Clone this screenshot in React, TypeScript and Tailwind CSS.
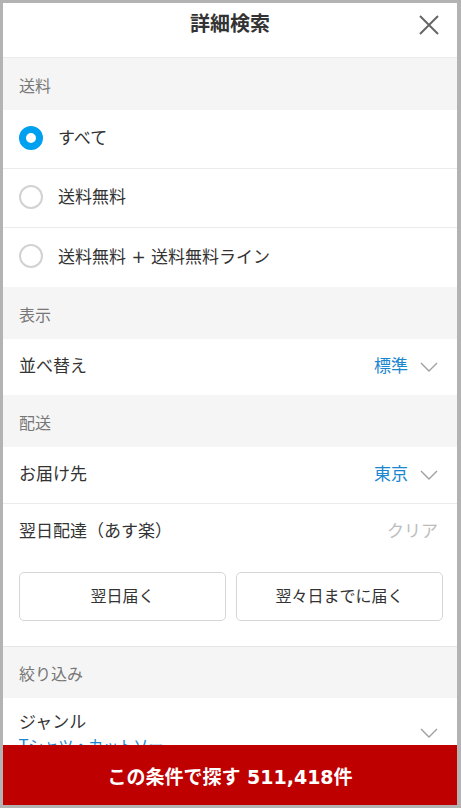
import React from "react";

const FONT = { fontFamily: '"DejaVu Sans", "Noto Sans CJK JP", "Noto Sans", sans-serif' };

function Chevron() {
  return (
    <svg width="18" height="10" viewBox="0 0 18 10" className="shrink-0">
      <path d="M1 1 L9 9 L17 1" fill="none" stroke="#a0a0a0" strokeWidth="1.4" />
    </svg>
  );
}

function SectionHeader({ label, borderTop }: { label: string; borderTop?: boolean }) {
  return (
    <div
      className={`h-[52px] shrink-0 flex items-center pt-[5px] px-4 bg-[#f5f5f5] text-[16px] text-[#777] ${
        borderTop ? "border-t border-[#e6e6e6]" : ""
      }`}
    >
      {label}
    </div>
  );
}

function RadioRow({ label, checked, border }: { label: React.ReactNode; checked?: boolean; border?: boolean }) {
  return (
    <div className={`h-[59px] shrink-0 flex items-center gap-[15px] px-4 pb-[3px] bg-white ${border ? "border-b border-[#ebebeb]" : ""}`}>
      {checked ? (
        <span className="w-6 h-6 rounded-full border-[7px] border-[#00a0f0] bg-white shrink-0" />
      ) : (
        <span className="w-6 h-6 rounded-full border-2 border-[#d2d2d2] bg-white shrink-0" />
      )}
      <span className="text-[17px] text-[#333] pt-[3px]">{label}</span>
    </div>
  );
}

function SelectRow({ label, value, border }: { label: string; value: string; border?: boolean }) {
  return (
    <div className={`shrink-0 flex items-center pl-4 pr-[19px] bg-white ${border ? "border-b border-[#ebebeb] h-[57px]" : "h-[56px]"}`}>
      <span className="flex-1 text-[17px] text-[#333]">{label}</span>
      <span className="text-[17px] text-[#1a86d0] mr-[12px]">{value}</span>
      <Chevron />
    </div>
  );
}

export default function App() {
  return (
    <div
      className="w-[461px] h-[808px] border-t-[3px] border-l-[3px] border-b-[3px] border-r-4 border-[#b3b3b3] bg-white overflow-hidden"
      style={FONT}
    >
      <div className="h-full flex flex-col">
        {/* Header */}
        <div className="h-[55px] shrink-0 border-b border-[#ebebeb] flex items-start justify-center relative">
          <h1 className="mt-[5px] text-[20px] leading-[32px] font-bold text-[#333]">詳細検索</h1>
          <button className="absolute right-[17px] top-[11px] w-[22px] h-[22px] flex items-center justify-center">
            <svg width="20" height="20" viewBox="0 0 20 20">
              <path d="M1 1 L19 19 M19 1 L1 19" stroke="#666" strokeWidth="2" />
            </svg>
          </button>
        </div>

        {/* Scrolling content */}
        <div className="flex-1 overflow-hidden flex flex-col">
          <SectionHeader label="送料" />
          <RadioRow label="すべて" checked border />
          <RadioRow label="送料無料" border />
          <RadioRow label="送料無料 + 送料無料ライン" />

          <SectionHeader label="表示" />
          <SelectRow label="並べ替え" value="標準" />

          <SectionHeader label="配送" />
          <SelectRow label="お届け先" value="東京" border />

          <div className="h-[56px] shrink-0 flex items-center pl-4 pr-[19px] bg-white">
            <span className="flex-1 text-[17px] text-[#333]">翌日配達（あす楽）</span>
            <span className="text-[17px] text-[#bdbdbd]">クリア</span>
          </div>
          <div className="shrink-0 grid grid-cols-2 gap-[10px] pl-4 pr-[14px] pt-3 pb-[25px] bg-white">
            <button className="h-[49px] rounded-[5px] border border-[#d6d6d6] bg-white text-[16px] text-[#333]">
              翌日届く
            </button>
            <button className="h-[49px] rounded-[5px] border border-[#d6d6d6] bg-white text-[16px] text-[#333]">
              翌々日までに届く
            </button>
          </div>

          <SectionHeader label="絞り込み" borderTop />
          <div className="shrink-0 flex items-center pl-4 pr-[19px] pt-[11px] pb-3 bg-white">
            <div className="flex-1 flex flex-col">
              <span className="text-[17px] leading-[26px] text-[#333]">ジャンル</span>
              <span className="text-[15px] leading-[22px] text-[#1a86d0]">Tシャツ・カットソー</span>
            </div>
            <Chevron />
          </div>
        </div>

        {/* Footer */}
        <button className="h-[60px] shrink-0 bg-[#bf0000] text-white text-[19px] font-bold flex items-center justify-center pt-[4px]">
          この条件で探す 511,418件
        </button>
      </div>
    </div>
  );
}
